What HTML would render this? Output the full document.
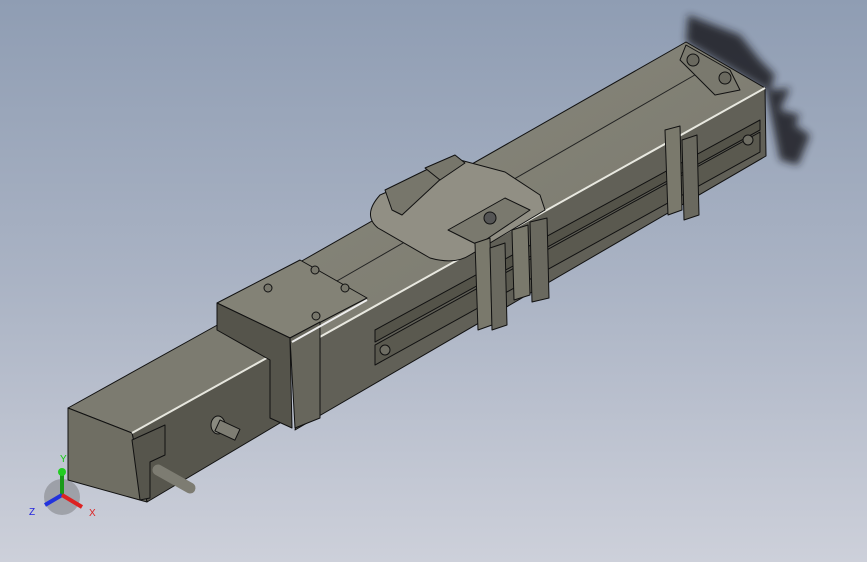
<!DOCTYPE html><html><head><style>html,body{margin:0;padding:0}body{width:867px;height:562px;overflow:hidden;background:linear-gradient(180deg,#8f9db3 0%,#aab3c4 50%,#cdd0da 100%)}svg{display:block}</style></head><body>
<svg width="867" height="562" viewBox="0 0 867 562" xmlns="http://www.w3.org/2000/svg" stroke="#111" stroke-width="1" stroke-linejoin="round">
<defs><filter id="b"><feGaussianBlur stdDeviation="4"/></filter>
<linearGradient id="tp" x1="0" y1="0" x2="1" y2="1"><stop offset="0" stop-color="#8a897d"/><stop offset="1" stop-color="#77766b"/></linearGradient></defs>
<path d="M688 15 L740 35 L760 60 L775 75 L770 90 L790 88 L780 110 L800 115 L795 125 L810 135 L798 165 L780 160 L766 90 L686 42 Z" fill="#1c1d22" stroke="none" filter="url(#b)" opacity="0.85"/>
<polygon points="300,262 686,42 765,88 318,338" fill="url(#tp)"/>
<line x1="330" y1="285" x2="700" y2="72" stroke="#222"/>
<polygon points="686,45 730,70 740,90 715,95 680,60" fill="#7a796e"/>
<circle cx="693" cy="60" r="6" fill="#6a695f"/><circle cx="725" cy="78" r="6" fill="#6a695f"/>
<polygon points="318,338 765,88 766,156 295,430" fill="#616057"/>
<line x1="318" y1="338" x2="765" y2="88" stroke="#e8e8e0" stroke-width="2"/>
<polygon points="375,330 760,120 760,130 375,342" fill="#545349"/>
<polygon points="375,345 760,132 760,152 375,365" fill="#5a594f"/>
<circle cx="385" cy="350" r="5" fill="#6e6d63"/><circle cx="748" cy="140" r="5" fill="#6e6d63"/>
<polygon points="68,408 230,318 290,345 132,433" fill="#7c7b70"/>
<polygon points="132,433 290,345 290,417 147,502" fill="#57564d"/>
<polygon points="68,408 132,433 147,502 68,480" fill="#6f6e63"/>
<line x1="132" y1="433" x2="290" y2="345" stroke="#e6e6de" stroke-width="2"/>
<polygon points="132,440 165,425 165,455 150,462 150,498 140,500" fill="#56554c"/>
<line x1="158" y1="470" x2="190" y2="488" stroke="#7d7c72" stroke-width="11" stroke-linecap="round"/>
<ellipse cx="218" cy="425" rx="7" ry="9" fill="#8a8a80"/><rect x="220" y="420" width="22" height="12" fill="#7e7d73" transform="rotate(25 220 420)"/>
<polygon points="217,303 300,260 367,298 290,338" fill="#838276"/>
<polygon points="217,303 290,338 292,428 270,418 270,360 217,330" fill="#55544b"/>
<polygon points="290,338 320,322 320,418 295,428" fill="#67665c"/>
<line x1="292" y1="342" x2="367" y2="300" stroke="#eee" stroke-width="2"/>
<circle cx="268" cy="288" r="4" fill="#77766b"/><circle cx="315" cy="270" r="4" fill="#77766b"/><circle cx="345" cy="288" r="4" fill="#77766b"/><circle cx="316" cy="316" r="4" fill="#77766b"/>
<path d="M380 195 L460 160 L505 172 L540 195 L545 210 L470 255 Q455 265 430 258 L378 228 Q362 215 380 195 Z" fill="#918f84"/>
<polygon points="385,190 430,168 445,175 402,215 392,210" fill="#77766b"/>
<polygon points="425,168 455,155 465,163 440,180" fill="#77766b"/>
<polygon points="448,230 505,198 530,210 478,245" fill="#7a796e"/>
<circle cx="490" cy="218" r="6" fill="#555"/>
<polygon points="475,243 490,238 492,325 478,330" fill="#7a796c"/>
<polygon points="490,248 505,243 507,325 492,330" fill="#6a695f"/>
<polygon points="512,230 528,225 530,295 514,300" fill="#7a796c"/>
<polygon points="530,222 547,218 549,298 532,302" fill="#6a695f"/>
<polygon points="665,130 680,126 682,210 668,215" fill="#7a796c"/>
<polygon points="682,140 697,135 699,215 684,220" fill="#6a695f"/>
<g stroke="none"><circle cx="62" cy="497" r="18" fill="#555" opacity="0.35"/>
<line x1="62" y1="495" x2="62" y2="475" stroke="#1a9a1a" stroke-width="4"/>
<circle cx="62" cy="472" r="4" fill="#2c2"/>
<line x1="62" y1="495" x2="45" y2="505" stroke="#2233dd" stroke-width="4"/>
<line x1="62" y1="495" x2="82" y2="507" stroke="#d22" stroke-width="4"/>
<text x="60" y="462" font-family="Liberation Sans,sans-serif" font-size="10" fill="#1c1">Y</text>
<text x="29" y="515" font-family="Liberation Sans,sans-serif" font-size="10" fill="#22d">Z</text>
<text x="89" y="516" font-family="Liberation Sans,sans-serif" font-size="10" fill="#d22">X</text></g>
</svg></body></html>
